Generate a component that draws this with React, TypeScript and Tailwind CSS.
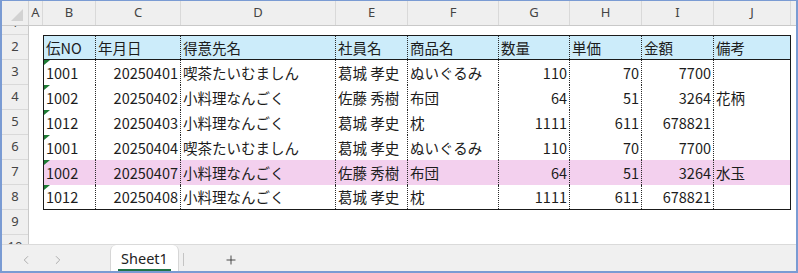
import React from "react";
import { ChevronLeft, ChevronRight, Plus } from "lucide-react";

type Align = "left" | "right";

// column header widths (include the 1px separator on the right)
const headerCols = [
  { letter: "A", width: "w-[14px]" },
  { letter: "B", width: "w-[53px]" },
  { letter: "C", width: "w-[85px]" },
  { letter: "D", width: "w-[155px]" },
  { letter: "E", width: "w-[72px]" },
  { letter: "F", width: "w-[91px]" },
  { letter: "G", width: "w-[71px]" },
  { letter: "H", width: "w-[72px]" },
  { letter: "I", width: "w-[72px]" },
  { letter: "J", width: "w-[77px]" },
];

// table columns B..J
const tableCols: { width: string; align: Align }[] = [
  { width: "w-[52px]", align: "left" },
  { width: "w-[85px]", align: "right" },
  { width: "w-[155px]", align: "left" },
  { width: "w-[72px]", align: "left" },
  { width: "w-[91px]", align: "left" },
  { width: "w-[71px]", align: "right" },
  { width: "w-[72px]", align: "right" },
  { width: "w-[72px]", align: "right" },
  { width: "w-[76px]", align: "left" },
];

const headings = ["伝NO", "年月日", "得意先名", "社員名", "商品名", "数量", "単価", "金額", "備考"];

const rows = [
  ["1001", "20250401", "喫茶たいむましん", "葛城 孝史", "ぬいぐるみ", "110", "70", "7700", ""],
  ["1002", "20250402", "小料理なんごく", "佐藤 秀樹", "布団", "64", "51", "3264", "花柄"],
  ["1012", "20250403", "小料理なんごく", "葛城 孝史", "枕", "1111", "611", "678821", ""],
  ["1001", "20250404", "喫茶たいむましん", "葛城 孝史", "ぬいぐるみ", "110", "70", "7700", ""],
  ["1002", "20250407", "小料理なんごく", "佐藤 秀樹", "布団", "64", "51", "3264", "水玉"],
  ["1012", "20250408", "小料理なんごく", "葛城 孝史", "枕", "1111", "611", "678821", ""],
];

const highlighted = 4;

const Cell: React.FC<{ col: number; text: string; marker?: boolean; heading?: boolean }> = ({
  col,
  text,
  marker,
  heading,
}) => {
  const c = tableCols[col];
  const last = col === tableCols.length - 1;
  const right = c.align === "right" && !heading;
  return (
    <div
      className={`relative shrink-0 h-full flex items-center whitespace-nowrap overflow-hidden ${c.width} ${
        right ? "justify-end pr-[2px]" : "justify-start pl-[2px]"
      } ${last ? "" : "border-r border-dotted border-[#2a2a2a]"}`}
    >
      {marker && (
        <svg className="absolute left-0 top-0" width="6" height="5" viewBox="0 0 6 5">
          <polygon points="0,0 6,0 0,5" fill="#1e7b34" />
        </svg>
      )}
      {text}
    </div>
  );
};

export default function App() {
  return (
    <div className="w-[798px] h-[273px] overflow-hidden bg-white border-t border-l-2 border-r-2 border-b-2 border-[#7a9bd3] flex flex-col font-['Noto_Sans',sans-serif]">
      {/* column letters */}
      <div className="h-[25px] shrink-0 flex bg-[#efefef] border-b border-[#c9c9c9] text-[13px] text-[#444]">
        <div className="relative w-[27px] shrink-0 border-r border-[#d4d4d4]">
          <svg className="absolute left-0 top-0" width="26" height="24" viewBox="0 0 26 24">
            <polygon points="21,8 21,20 9,20" fill="#d2d2d2" />
          </svg>
        </div>
        {headerCols.map((h) => (
          <div
            key={h.letter}
            className={`shrink-0 ${h.width} border-r border-[#d9d9d9] flex items-center justify-center`}
          >
            {h.letter}
          </div>
        ))}
        <div className="flex-1" />
      </div>

      {/* grid body */}
      <div className="h-[218px] shrink-0 flex overflow-hidden">
        <div className="w-[27px] shrink-0 flex flex-col bg-[#efefef] border-r border-[#c9c9c9] text-[13px] text-[#444]">
          <div className="h-[9px] shrink-0 overflow-hidden border-b border-[#d9d9d9]">
            <div className="h-[25px] -mt-[16px] flex items-center justify-center">1</div>
          </div>
          {[2, 3, 4, 5, 6, 7, 8, 9, 10].map((n) => (
            <div
              key={n}
              className="h-[25px] shrink-0 flex items-center justify-center border-b border-[#d9d9d9]"
            >
              {n}
            </div>
          ))}
        </div>

        <div className="flex-1 pl-[14px] pt-[9px] font-['Noto_Sans_CJK_JP',sans-serif] text-[14.5px] text-[#1c1c1c]">
          <div className="w-[748px] border border-[#1a1a1a]">
            <div className="h-[24px] flex bg-[#ccecfa] border-b border-[#1a1a1a]">
              {headings.map((t, i) => (
                <Cell key={i} col={i} text={t} heading />
              ))}
            </div>
            {rows.map((r, ri) => (
              <div
                key={ri}
                className={`flex ${ri === rows.length - 1 ? "h-[24px]" : "h-[25px]"} ${
                  ri === highlighted ? "bg-[#f3d0ee]" : "bg-white"
                }`}
              >
                {r.map((t, i) => (
                  <Cell key={i} col={i} text={t} marker={i === 0} />
                ))}
              </div>
            ))}
          </div>
        </div>
      </div>

      {/* sheet tabs */}
      <div className="flex-1 flex items-stretch bg-[#f0f0f0] border-t border-[#dadada]">
        <div className="w-[108px] shrink-0 flex items-center pl-[17px] pt-[3px] gap-[18px] text-[#a3a3a3]">
          <ChevronLeft size={14} strokeWidth={1.5} />
          <ChevronRight size={14} strokeWidth={1.5} />
        </div>
        <div className="w-[69px] shrink-0 bg-white rounded-t-[6px] border-x border-[#d6d6d6] flex items-end justify-center">
          <span className="px-[3px] pb-[1px] border-b-2 border-[#217346] text-[14.5px] leading-[20px] text-[#222]">
            Sheet1
          </span>
        </div>
        <div className="ml-[4px] mt-[8px] w-px h-[13px] bg-[#c4c4c4]" />
        <div className="ml-[40px] flex items-center pt-[3px] text-[#333]">
          <Plus size={14} strokeWidth={1.5} />
        </div>
      </div>
    </div>
  );
}
